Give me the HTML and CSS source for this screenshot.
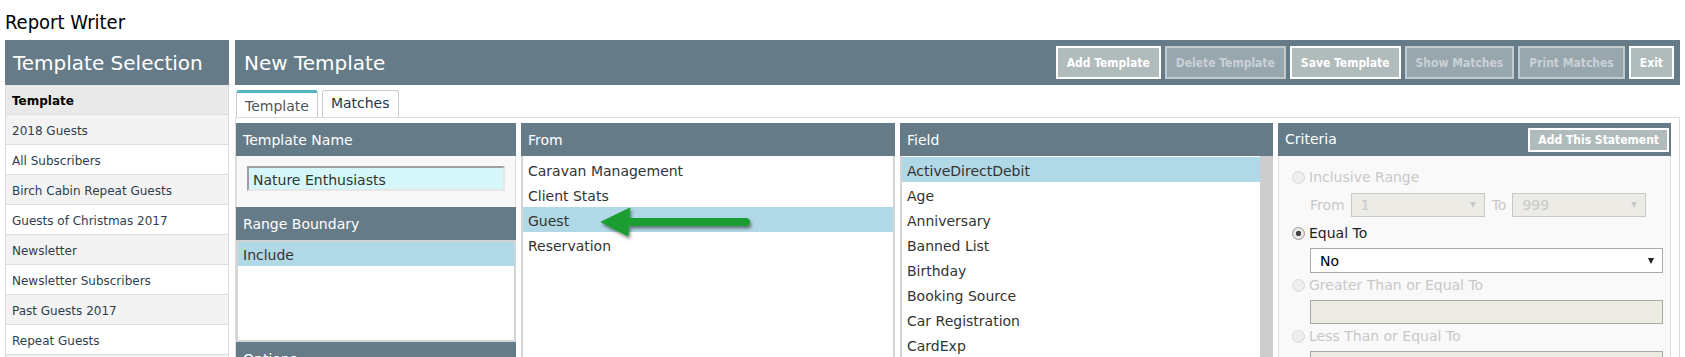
FILE: index.html
```html
<!DOCTYPE html>
<html lang="en">
<head>
    <meta charset="UTF-8">
    <title>Report Writer</title>
    <link rel="stylesheet" href="styles.css">
</head>
<body>
    <h1 class="page-title">Report Writer</h1>
    <div class="layout">
        <aside class="sidebar">
            <div class="sidebar-head">Template Selection</div>
            <ul class="template-list">
                <li class="list-title">Template</li>
                <li>2018 Guests</li>
                <li>All Subscribers</li>
                <li>Birch Cabin Repeat Guests</li>
                <li>Guests of Christmas 2017</li>
                <li>Newsletter</li>
                <li>Newsletter Subscribers</li>
                <li>Past Guests 2017</li>
                <li>Repeat Guests</li>
                <li>&nbsp;</li>
            </ul>
        </aside>
        <main class="editor">
            <div class="editor-head">
                <h2>New Template</h2>
                <div class="actions">
                    <button class="btn">Add Template</button>
                    <button class="btn" disabled>Delete Template</button>
                    <button class="btn">Save Template</button>
                    <button class="btn" disabled>Show Matches</button>
                    <button class="btn" disabled>Print Matches</button>
                    <button class="btn">Exit</button>
                </div>
            </div>
            <div class="tabs">
                <span class="tab active">Template</span>
                <span class="tab">Matches</span>
            </div>
            <div class="tab-body">
                <div class="col">
                    <div class="panel-head">Template Name</div>
                    <div class="name-box">
                        <input class="name-input" type="text" value="Nature Enthusiasts">
                    </div>
                    <div class="panel-head">Range Boundary</div>
                    <ul class="listbox range-list">
                        <li class="selected">Include</li>
                    </ul>
                    <div class="panel-head">Options</div>
                </div>
                <div class="col">
                    <div class="panel-head">From</div>
                    <div class="listbox from-list">
                        <ul>
                            <li>Caravan Management</li>
                            <li>Client Stats</li>
                            <li class="selected">Guest</li>
                            <li>Reservation</li>
                        </ul>
                        <svg class="pointer" width="170" height="44" viewBox="0 0 170 44">
                            <defs>
                                <filter id="shade" x="-10%" y="-30%" width="120%" height="170%">
                                    <feDropShadow dx="1.5" dy="2.5" stdDeviation="1.5" flood-color="#000" flood-opacity="0.45"/>
                                </filter>
                            </defs>
                            <g filter="url(#shade)" fill="#1d9d33" stroke="#1d9d33">
                                <line x1="30" y1="16" x2="149" y2="16" stroke-width="8" stroke-linecap="round"/>
                                <polygon points="4,16 33,2 31,30" stroke-width="1" stroke-linejoin="round"/>
                            </g>
                        </svg>
                    </div>
                </div>
                <div class="col">
                    <div class="panel-head">Field</div>
                    <div class="listbox field-list">
                        <ul>
                            <li class="selected">ActiveDirectDebit</li>
                            <li>Age</li>
                            <li>Anniversary</li>
                            <li>Banned List</li>
                            <li>Birthday</li>
                            <li>Booking Source</li>
                            <li>Car Registration</li>
                            <li>CardExp</li>
                        </ul>
                        <div class="scrollbar"></div>
                    </div>
                </div>
                <div class="col">
                    <div class="panel-head criteria-head">
                        <span>Criteria</span>
                        <button class="btn btn-small">Add This Statement</button>
                    </div>
                    <div class="criteria">
                        <label class="option disabled"><span class="radio"></span>Inclusive Range</label>
                        <div class="range-row disabled">
                            <span>From</span>
                            <div class="select select-off"><span>1</span><span class="caret"></span></div>
                            <span>To</span>
                            <div class="select select-off"><span>999</span><span class="caret"></span></div>
                        </div>
                        <label class="option"><span class="radio checked"></span>Equal To</label>
                        <div class="select select-wide"><span>No</span><span class="caret"></span></div>
                        <label class="option disabled"><span class="radio"></span>Greater Than or Equal To</label>
                        <div class="textbox"></div>
                        <label class="option disabled"><span class="radio"></span>Less Than or Equal To</label>
                        <div class="textbox"></div>
                    </div>
                </div>
            </div>
        </main>
    </div>
</body>
</html>
```

FILE: styles.css
```css
* {
    box-sizing: border-box;
}
body {
    margin: 0;
    font-family: "DejaVu Sans", Verdana, sans-serif;
    color: #333;
    background: #fff;
    overflow: hidden;
}
ul {
    list-style: none;
    margin: 0;
    padding: 0;
}
.page-title {
    margin: 0;
    height: 40px;
    padding: 10px 0 0 5px;
    font-family: "DejaVu Sans Condensed", "DejaVu Sans", sans-serif;
    font-stretch: condensed;
    font-size: 20px;
    line-height: 24px;
    font-weight: normal;
    color: #000;
}
.layout {
    display: flex;
    gap: 6px;
    padding: 0 5px;
}

/* left column */
.sidebar {
    width: 224px;
    flex: none;
}
.sidebar-head {
    height: 45px;
    line-height: 46px;
    padding: 0 8px;
    background: #657b87;
    color: #fff;
    font-size: 20px;
}
.template-list {
    border-left: 1px solid #ddd;
    border-right: 1px solid #ddd;
}
.template-list li {
    height: 30px;
    line-height: 32px;
    padding-left: 6px;
    border-bottom: 1px solid #ddd;
    font-size: 12px;
    color: #2f3e4c;
    background: #fff;
}
.template-list li:nth-child(even) {
    background: #f3f3f3;
}
.template-list .list-title {
    background: #e9e9e9;
    font-weight: bold;
    color: #000;
}

/* main area */
.editor {
    flex: 1;
    min-width: 0;
}
.editor-head {
    height: 45px;
    display: flex;
    align-items: center;
    justify-content: space-between;
    padding: 0 6px 0 9px;
    background: #657b87;
}
.editor-head h2 {
    margin: 0;
    font-size: 20px;
    font-weight: normal;
    color: #fff;
}
.actions {
    display: flex;
    gap: 4px;
}
.btn {
    height: 33px;
    padding: 0 9px;
    border: 2px solid #fff;
    background: #b0bcbb;
    color: #fff;
    font-family: "DejaVu Sans Condensed", "DejaVu Sans", sans-serif;
    font-stretch: condensed;
    font-weight: bold;
    font-size: 12px;
}
.btn:disabled {
    background: #98a6ad;
    border-color: #c1cace;
    color: #c9d1d5;
}
.btn-small {
    height: 24px;
    padding: 0 8px;
}

.tabs {
    display: flex;
    gap: 4px;
    margin-top: 5px;
    padding-left: 1px;
}
.tab {
    height: 27px;
    padding: 4px 8px 0;
    border: 1px solid #ccc;
    border-bottom: none;
    border-radius: 3px 3px 0 0;
    font-size: 14px;
    color: #1f3550;
}
.tab.active {
    padding-top: 5px;
    border-top: 3px solid #56b5c0;
    color: #555;
}
.tab-body {
    display: grid;
    grid-template-columns: 280px 374px 373px 393px;
    column-gap: 5px;
    height: 300px;
    padding-top: 5px;
    border: 1px solid #ddd;
}
.col {
    display: flex;
    flex-direction: column;
}
.panel-head {
    height: 33px;
    line-height: 35px;
    padding: 0 7px;
    background: #657b87;
    color: #fff;
    font-size: 14px;
    flex: none;
}
.name-box {
    height: 51px;
    padding: 10px 10px 0;
    background: #f8f8f8;
    border-left: 1px solid #ddd;
    border-right: 1px solid #ddd;
}
.name-input {
    display: block;
    width: 100%;
    height: 25px;
    padding: 2px 4px 0;
    border: 2px solid #e6e6e6;
    border-top-color: #a0a0a0;
    border-left-color: #a0a0a0;
    background: #d5f7fa;
    font-family: inherit;
    font-size: 14px;
    color: #333;
}
.listbox {
    border: 2px solid #d4d4d4;
    background: #fff;
    font-size: 14px;
}
.listbox li {
    height: 25px;
    line-height: 28px;
    padding-left: 5px;
    white-space: nowrap;
}
.listbox .selected {
    background: #b1d8e6;
}
.range-list {
    height: 102px;
}
.range-list li {
    height: 24px;
    line-height: 27px;
}
.from-list {
    position: relative;
    flex: 1;
    border-top: none;
    padding-top: 1px;
}
.pointer {
    position: absolute;
    left: 74px;
    top: 50px;
}
.field-list {
    flex: 1;
    display: flex;
    border-top: none;
    border-right: none;
    padding-top: 1px;
}
.field-list ul {
    flex: 1;
}
.scrollbar {
    width: 13px;
    margin-top: -1px;
    background: #cdcdcd;
}

/* criteria */
.criteria-head {
    display: flex;
    align-items: center;
    justify-content: space-between;
    padding-right: 2px;
}
.criteria {
    flex: 1;
    padding: 9px 7px 0 13px;
    background: #f9f9f9;
    border-left: 1px solid #ddd;
    border-right: 1px solid #ddd;
    font-size: 14px;
    color: #222;
}
.option {
    display: flex;
    align-items: center;
    gap: 4px;
    height: 24px;
}
.disabled {
    color: #c8c8c8;
}
.radio {
    width: 13px;
    height: 13px;
    border-radius: 50%;
    border: 1px solid #9a9a9a;
    background: radial-gradient(circle, #fff 0, #e4e4e4 100%);
}
.disabled .radio {
    border-color: #d9d9d9;
    background: #eeeeee;
}
.radio.checked {
    background: radial-gradient(circle, #444 0, #444 2.5px, #e9e9e9 3px, #dcdcdc 100%);
}
.range-row {
    display: flex;
    align-items: center;
    gap: 6px;
    margin: 4px 0 4px 18px;
}
.select {
    display: flex;
    align-items: center;
    justify-content: space-between;
    height: 24px;
    padding: 0 8px 0 9px;
    border: 1px solid #a9a9a9;
    background: #fff;
}
.select-off {
    width: 134px;
    border-color: #c8c8c8;
    background: #ecebe6;
}
.select-off + span {
    margin-left: 1px;
}
.select-wide {
    height: 25px;
    margin: 3px 0 0 18px;
    color: #000;
}
.caret {
    width: 0;
    height: 0;
    border-left: 3.5px solid transparent;
    border-right: 3.5px solid transparent;
    border-top: 6px solid #222;
}
.select-off .caret {
    border-top-color: #c8c8c8;
}
.textbox {
    height: 24px;
    margin: 3px 0 0 18px;
    border: 1px solid #a9a9a9;
    background: #ebebe4;
}
```
